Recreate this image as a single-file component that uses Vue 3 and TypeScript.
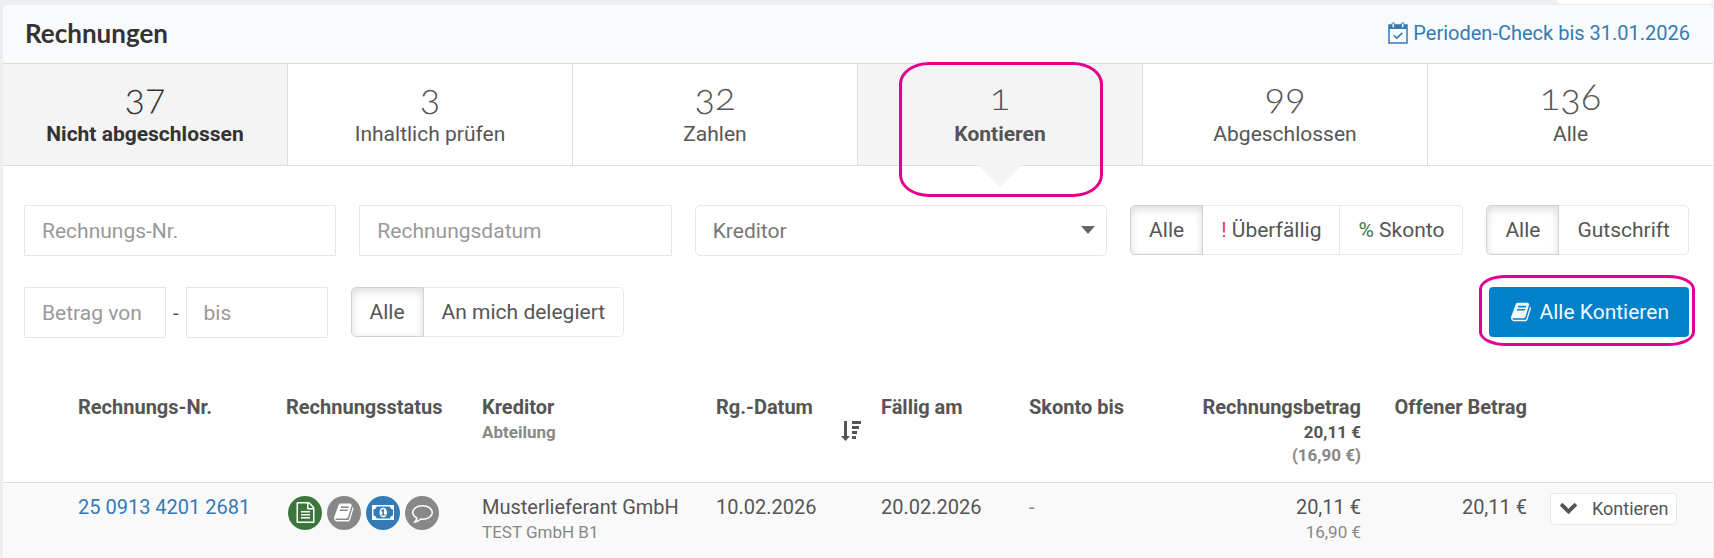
<script setup lang="ts">
import { ref } from 'vue'

interface Tab {
  count: number
  label: string
  strong?: boolean
}

const tabs: Tab[] = [
  { count: 37, label: 'Nicht abgeschlossen', strong: true },
  { count: 3, label: 'Inhaltlich prüfen' },
  { count: 32, label: 'Zahlen' },
  { count: 1, label: 'Kontieren' },
  { count: 99, label: 'Abgeschlossen' },
  { count: 136, label: 'Alle' },
]
const activeTab = ref(3)

const dueFilter = ref(0)
const typeFilter = ref(0)
const delegateFilter = ref(0)

const bookPath =
  'M1639 478q40 57 18 129l-275 906q-19 64-76.500 107.500t-122.500 43.500h-923q-77 0-148.500-53.500t-99.500-131.500q-24-67-2-127 0-4 3-27t4-37q1-8-3-21.500t-3-19.500q2-11 8-21t16.500-23.500 16.500-23.500q23-38 45-91.500t30-91.500q3-10 .5-30t-.5-28q3-11 17-28t17-23q21-36 42-92t25-90q1-9-2.500-32t.5-28q4-13 22-30.500t22-22.500q19-26 42.500-84.500t27.500-96.500q1-8-3-25.500t-2-26.500q2-8 9-18t18-23 17-21q8-12 16.500-30.500t15-35 16-36 19.500-32 26.500-23.500 36-11.500 47.500 5.500l-1 3q38-9 51-9h761q74 0 114 56t18 130l-274 906q-36 119-71.500 153.500t-128.500 34.500h-869q-27 0-38 15-11 16-1 43 24 70 144 70h923q29 0 56-15.500t35-41.500l300-987q7-22 5-57 38 15 59 43zm-1064 2q-4 13 2 22.500t20 9.500h608q13 0 25.500-9.500t16.500-22.500l21-64q4-13-2-22.500t-20-9.500h-608q-13 0-25.500 9.500t-16.500 22.500zm-83 256q-4 13 2 22.500t20 9.500h608q13 0 25.500-9.500t16.500-22.500l21-64q4-13-2-22.500t-20-9.500h-608q-13 0-25.500 9.500t-16.500 22.500z'

interface StatusIcon {
  name: string
  tone: string
  viewBox: string
  path: string
}

const statusIcons: StatusIcon[] = [
  {
    name: 'Beleg',
    tone: 'green',
    viewBox: '0 0 1792 1792',
    path: 'M1596 380q28 28 48 76t20 88v1152q0 40-28 68t-68 28h-1344q-40 0-68-28t-28-68v-1600q0-40 28-68t68-28h896q40 0 88 20t76 48zm-444-244v376h376q-10-29-22-41l-313-313q-12-12-41-22zm384 1528v-1024h-416q-40 0-68-28t-28-68v-416h-768v1536h1280zm-1024-864q0-14 9-23t23-9h704q14 0 23 9t9 23v64q0 14-9 23t-23 9h-704q-14 0-23-9t-9-23v-64zm736 224q14 0 23 9t9 23v64q0 14-9 23t-23 9h-704q-14 0-23-9t-9-23v-64q0-14 9-23t23-9h704zm0 256q14 0 23 9t9 23v64q0 14-9 23t-23 9h-704q-14 0-23-9t-9-23v-64q0-14 9-23t23-9h704z',
  },
  { name: 'Kontierung', tone: 'grey', viewBox: '0 0 1664 1792', path: bookPath },
  {
    name: 'Zahlung',
    tone: 'blue',
    viewBox: '0 0 1920 1792',
    path: 'M768 1152h384v-96h-128v-448h-114l-148 137 77 80q42-37 55-57h2v288h-128v96zm512-256q0 70-21 142t-59.500 134-101.500 101-138 39-138-39-101.500-101-59.500-134-21-142 21-142 59.500-134 101.500-101 138-39 138 39 101.500 101 59.500 134 21 142zm512 256v-512q-106 0-181-75t-75-181h-1152q0 106-75 181t-181 75v512q106 0 181 75t75 181h1152q0-106 75-181t181-75zm128-832v1152q0 26-19 45t-45 19h-1792q-26 0-45-19t-19-45v-1152q0-26 19-45t45-19h1792q26 0 45 19t19 45z',
  },
  {
    name: 'Kommentar',
    tone: 'grey',
    viewBox: '0 0 1792 1792',
    path: 'M896 384q-204 0-381.500 69.500t-282 187.500-104.500 255q0 112 71.500 213.500t201.500 175.500l87 50-27 96q-24 91-70 172 152-63 275-171l43-38 57 6q69 8 130 8 204 0 381.500-69.500t282-187.500 104.500-255-104.500-255-282-187.500-381.500-69.500zm896 512q0 174-120 321.500t-326 233-450 85.500q-70 0-145-8-198 175-460 242-49 14-114 22h-5q-15 0-27-10.500t-16-27.500v-1q-3-4-.5-12t2-10 4.500-9.500l6-9 7-8.500 8-9q7-8 31-34.500t34.500-38 31-39.500 32.500-51 27-59 26-76q-157-89-247.500-220t-90.500-281q0-130 71-248.500t191-204.500 286-136.500 348-50.500 348 50.500 286 136.500 191 204.500 71 248.500z',
  },
]
</script>

<template>
  <div class="page">
    <div class="strip"><div class="strip-box"></div></div>
    <main class="card">
      <header class="head">
        <h1>Rechnungen</h1>
        <a class="period" href="#">
          <svg class="cal" viewBox="0 0 20 22" aria-hidden="true">
            <path d="M1 3h18v18H1z" fill="none" stroke="currentColor" stroke-width="1.500" />
            <path d="M1 3h18v4H1z" fill="currentColor" />
            <rect x="4" y="0.700" width="2.600" height="5" rx="1.300" fill="#f9fafc" stroke="currentColor" />
            <rect x="13.400" y="0.700" width="2.600" height="5" rx="1.300" fill="#f9fafc" stroke="currentColor" />
            <path d="M5.800 13.200l3 3 5.600-5.400" fill="none" stroke="currentColor" stroke-width="1.600" />
          </svg>
          <span>Perioden-Check bis 31.01.2026</span>
        </a>
      </header>

      <nav class="tabs" aria-label="Status">
        <button
          v-for="(tab, i) in tabs"
          :key="tab.label"
          type="button"
          class="tab"
          :class="{ active: i === activeTab, strong: tab.strong }"
          @click="activeTab = i"
        >
          <span class="count">{{ tab.count }}</span>
          <span class="label">{{ tab.label }}</span>
          <span v-if="i === activeTab" class="pointer"></span>
          <span v-if="i === activeTab" class="ring ring-tab"></span>
        </button>
      </nav>

      <form class="filters" @submit.prevent>
        <div class="line">
          <input class="box grow-s" type="text" placeholder="Rechnungs-Nr." aria-label="Rechnungs-Nr." />
          <input class="box grow-s" type="text" placeholder="Rechnungsdatum" aria-label="Rechnungsdatum" />
          <div class="pick">
            <select class="box" aria-label="Kreditor">
              <option>Kreditor</option>
            </select>
            <svg class="caret" viewBox="0 0 14 8" aria-hidden="true"><path d="M0 0h14L7 8z" /></svg>
          </div>
          <div class="group" role="group" aria-label="Fälligkeit">
            <button type="button" :class="{ on: dueFilter === 0 }" @click="dueFilter = 0">Alle</button>
            <button type="button" :class="{ on: dueFilter === 1 }" @click="dueFilter = 1">
              <span class="warn">!</span> Überfällig
            </button>
            <button type="button" :class="{ on: dueFilter === 2 }" @click="dueFilter = 2">
              <span class="good">%</span> Skonto
            </button>
          </div>
          <div class="group" role="group" aria-label="Belegart">
            <button type="button" :class="{ on: typeFilter === 0 }" @click="typeFilter = 0">Alle</button>
            <button type="button" :class="{ on: typeFilter === 1 }" @click="typeFilter = 1">Gutschrift</button>
          </div>
        </div>
        <div class="line">
          <div class="range">
            <input class="box amount" type="text" placeholder="Betrag von" aria-label="Betrag von" />
            <span>-</span>
            <input class="box amount" type="text" placeholder="bis" aria-label="Betrag bis" />
          </div>
          <div class="group" role="group" aria-label="Delegation">
            <button type="button" :class="{ on: delegateFilter === 0 }" @click="delegateFilter = 0">Alle</button>
            <button type="button" :class="{ on: delegateFilter === 1 }" @click="delegateFilter = 1">
              An mich delegiert
            </button>
          </div>
          <button type="button" class="primary">
            <svg class="book" viewBox="0 0 1664 1792" aria-hidden="true"><path :d="bookPath" /></svg>
            <span>Alle Kontieren</span>
            <span class="ring ring-button"></span>
          </button>
        </div>
      </form>

      <table>
        <colgroup>
          <col class="c-lead" />
          <col class="c-number" />
          <col class="c-status" />
          <col class="c-creditor" />
          <col class="c-date" />
          <col class="c-due" />
          <col class="c-discount" />
          <col class="c-amount" />
          <col class="c-open" />
          <col class="c-action" />
        </colgroup>
        <thead>
          <tr>
            <th></th>
            <th scope="col">Rechnungs-Nr.</th>
            <th scope="col">Rechnungsstatus</th>
            <th scope="col">Kreditor<small>Abteilung</small></th>
            <th scope="col">
              Rg.-Datum
              <svg class="sort" viewBox="0 0 20 20" aria-hidden="true">
                <path d="M3 0h3v15h3l-4.500 5L0 15h3zM11 0h9v3h-9zM11 5h7v3h-7zM11 10h5v3h-5zM11 15h4v3h-4z" />
              </svg>
            </th>
            <th scope="col">Fällig am</th>
            <th scope="col">Skonto bis</th>
            <th scope="col" class="num">Rechnungsbetrag<small class="dark">20,11 €</small><small>(16,90 €)</small></th>
            <th scope="col" class="num">Offener Betrag</th>
            <th></th>
          </tr>
        </thead>
        <tbody>
          <tr>
            <td></td>
            <td><a href="#">25 0913 4201 2681</a></td>
            <td>
              <div class="states">
                <span
                  v-for="icon in statusIcons"
                  :key="icon.name"
                  class="state"
                  :class="icon.tone"
                  role="img"
                  :aria-label="icon.name"
                >
                  <svg :viewBox="icon.viewBox"><path :d="icon.path" /></svg>
                </span>
              </div>
            </td>
            <td>Musterlieferant GmbH<small>TEST GmbH B1</small></td>
            <td>10.02.2026</td>
            <td>20.02.2026</td>
            <td class="muted">-</td>
            <td class="num">20,11 €<small>16,90 €</small></td>
            <td class="num">20,11 €</td>
            <td>
              <button type="button" class="action">
                <svg class="chevron" viewBox="90 533 1612 1035" aria-hidden="true">
                  <path
                    d="M1683 808l-742 741q-19 19-45 19t-45-19l-742-741q-19-19-19-45.500t19-45.500l166-165q19-19 45-19t45 19l531 531 531-531q19-19 45-19t45 19l166 165q19 19 19 45.500t-19 45.500z"
                  />
                </svg>
                <span>Kontieren</span>
              </button>
            </td>
          </tr>
        </tbody>
      </table>
    </main>
  </div>
</template>

<style>
body {
  margin: 0;
  background: #eceeef;
}
</style>

<style scoped>
.page {
  box-sizing: border-box;
  min-height: 100vh;
  display: flex;
  flex-direction: column;
  padding: 0 1px 0 3px;
  background: #eceeef;
  color: #555;
  font-family: Roboto, 'Liberation Sans', sans-serif;
  font-size: 20px;
  overflow: hidden;
}
.page * {
  box-sizing: border-box;
}
svg {
  display: block;
  fill: currentColor;
}
button,
input,
select {
  margin: 0;
  color: inherit;
  font-family: inherit;
  font-size: 21px;
}
button {
  cursor: pointer;
}
a {
  color: #337ab7;
  text-decoration: none;
}

.strip {
  display: flex;
  justify-content: flex-end;
  height: 5px;
}
.strip-box {
  width: 156px;
  height: 4px;
  border-radius: 0 0 5px 5px;
  background: #fff;
}

.card {
  flex: 1;
  border-radius: 5px 5px 0 0;
  background: #fff;
}
.head {
  display: flex;
  align-items: center;
  justify-content: space-between;
  height: 59px;
  padding: 0 23px 3px 22px;
  border-bottom: 1px solid #dcdddd;
  border-radius: 5px 5px 0 0;
  background: #f9fafc;
}
h1 {
  margin: 0;
  color: #333;
  font-family: Lato, sans-serif;
  font-size: 26px;
  font-weight: 700;
  line-height: 32px;
}
.period {
  display: flex;
  align-items: center;
  gap: 5px;
}
.cal {
  width: 20px;
  height: 22px;
}

.tabs {
  display: grid;
  grid-template-columns: repeat(6, 1fr);
}
.tab {
  position: relative;
  display: flex;
  flex-direction: column;
  align-items: center;
  gap: 4px;
  height: 102px;
  padding: 10px 0 0;
  border: 0;
  border-right: 1px solid #dcdddd;
  border-bottom: 1px solid #dcdddd;
  background: #fff;
}
.tab:last-child {
  border-right: 0;
}
.count {
  font-family: Lato, sans-serif;
  font-size: 38px;
  font-weight: 300;
  line-height: 42px;
  font-variant-numeric: oldstyle-nums;
}
.label {
  line-height: 28px;
}
.tab.active,
.tab.strong {
  background: #f4f4f4;
}
.tab.active .label,
.tab.strong .label {
  font-weight: 700;
}
.tab.strong {
  color: #333;
}
.pointer {
  position: absolute;
  left: 50%;
  top: 100%;
  border: 22px solid transparent;
  border-top-color: #f4f4f4;
  border-bottom: 0;
  transform: translateX(-50%);
}
.ring {
  position: absolute;
  z-index: 1;
  border: 3px solid #e3008f;
  pointer-events: none;
}
.ring-tab {
  inset: -2px 39px -32px 41px;
  border-radius: 30px / 22px;
}
.ring-button {
  inset: -12px -6px -9px -10px;
  border-radius: 27px / 14px;
}

.filters {
  display: flex;
  flex-direction: column;
  gap: 31px;
  padding: 39px 24px 49px 21px;
}
.line {
  display: flex;
  align-items: flex-start;
  gap: 23px;
}
.box {
  min-width: 0;
  height: 51px;
  padding: 0 17px;
  border: 1px solid #e5e6e7;
  border-radius: 1px;
  background: #fff;
}
.box::placeholder {
  color: #999;
  opacity: 1;
}
.grow-s {
  flex: 3 3 312px;
}
.pick {
  position: relative;
  flex: 4 4 412px;
}
.pick select {
  width: 100%;
  border-radius: 5px;
  color: #777;
  appearance: none;
}
.caret {
  position: absolute;
  right: 12px;
  top: 21px;
  width: 14px;
  height: 8px;
  color: #666;
  pointer-events: none;
}
.group {
  display: flex;
}
.group button {
  height: 50px;
  padding: 0 18px;
  border: 1px solid #e7e8e9;
  border-left-width: 0;
  background: #fff;
  white-space: nowrap;
}
.group button:first-child {
  border-left-width: 1px;
  border-radius: 5px 0 0 5px;
}
.group button:last-child {
  border-radius: 0 5px 5px 0;
}
.group .on {
  border-color: #d2d2d2;
  box-shadow: inset 0 3px 8px rgba(0, 0, 0, 0.15);
}
.warn {
  color: #ed3b57;
}
.good {
  color: #3c763d;
}
.range {
  display: flex;
  align-items: center;
  gap: 7px;
}
.amount {
  width: 142px;
}
.primary {
  position: relative;
  display: flex;
  align-items: center;
  gap: 9px;
  height: 50px;
  margin-left: auto;
  padding: 0 20px 0 22px;
  border: 0;
  border-radius: 4px;
  background: #0081cc;
  color: #f4f8fb;
}
.book {
  width: 20px;
  height: 22px;
}

table {
  width: 100%;
  border-collapse: collapse;
  table-layout: fixed;
  line-height: 28px;
}
.c-lead {
  width: 65px;
}
.c-number {
  width: 208px;
}
.c-status {
  width: 196px;
}
.c-creditor {
  width: 234px;
}
.c-date {
  width: 165px;
}
.c-due {
  width: 148px;
}
.c-discount {
  width: 156px;
}
.c-amount {
  width: 196px;
}
.c-open {
  width: 166px;
}
.c-action {
  width: 176px;
}
th,
td {
  padding: 0 10px;
  text-align: left;
  vertical-align: top;
  white-space: nowrap;
}
th {
  height: 95px;
  padding-top: 6px;
  border-bottom: 1px solid #dcdddd;
  font-weight: 700;
}
td {
  height: 75px;
  padding-top: 10px;
  background: #f9f9f9;
}
.num {
  text-align: right;
}
small {
  display: block;
  color: #888;
  font-size: 17px;
  line-height: 23px;
}
small.dark {
  color: #555;
}
.muted {
  color: #888;
}
.sort {
  width: 20px;
  height: 20px;
  margin-left: auto;
}
.states {
  display: flex;
  gap: 5px;
  padding: 3px 0 0 2px;
}
.state {
  display: grid;
  place-items: center;
  width: 34px;
  height: 34px;
  border-radius: 50%;
  color: #fff;
}
.state svg {
  height: 21px;
}
.green {
  background: #3c763d;
}
.grey {
  background: #888;
}
.blue {
  background: #337ab7;
}
.action {
  display: flex;
  align-items: center;
  gap: 15px;
  height: 32px;
  margin-left: 3px;
  padding: 0 7px 0 9px;
  border: 1px solid #e7e8e9;
  border-radius: 4px;
  background: #fff;
  font-size: 18px;
}
.chevron {
  width: 17px;
  height: 11px;
}
</style>
